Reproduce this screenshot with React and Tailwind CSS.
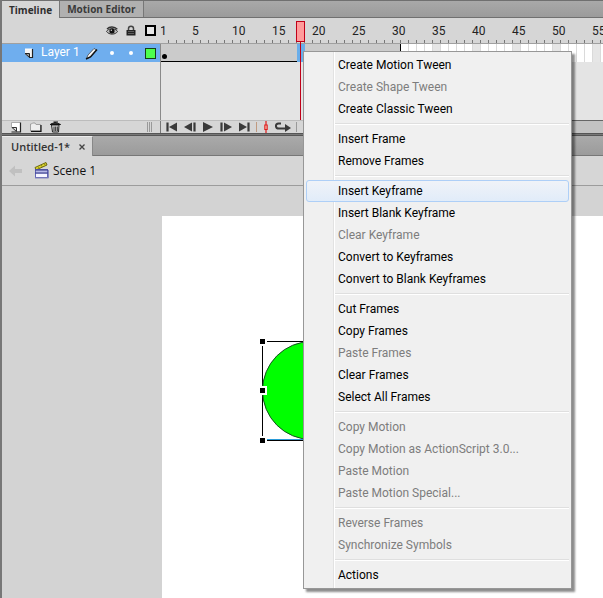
import React, { useEffect, useState } from "react";

const menuGroups = [
  [["Create Motion Tween"], ["Create Shape Tween", true], ["Create Classic Tween"]],
  [["Insert Frame"], ["Remove Frames"]],
  [
    ["Insert Keyframe"],
    ["Insert Blank Keyframe"],
    ["Clear Keyframe", true],
    ["Convert to Keyframes"],
    ["Convert to Blank Keyframes"],
  ],
  [["Cut Frames"], ["Copy Frames"], ["Paste Frames", true], ["Clear Frames"], ["Select All Frames"]],
  [
    ["Copy Motion", true],
    ["Copy Motion as ActionScript 3.0...", true],
    ["Paste Motion", true],
    ["Paste Motion Special...", true],
  ],
  [["Reverse Frames", true], ["Synchronize Symbols", true]],
  [["Actions"]],
];

const LAYER_COLUMN = 161;
const FRAME_WIDTH = 8;
const SPAN_END = 30;
const CURRENT = 18;
const ACTIVE_ITEM = "Insert Keyframe";

function useVisibleFrames() {
  const [width, setWidth] = useState(window.innerWidth);
  useEffect(() => {
    const onResize = () => setWidth(window.innerWidth);
    window.addEventListener("resize", onResize);
    return () => window.removeEventListener("resize", onResize);
  }, []);
  const count = Math.ceil((width - LAYER_COLUMN) / FRAME_WIDTH);
  return Array.from({ length: Math.max(count, SPAN_END) }, (_, i) => i + 1);
}

function EyeIcon() {
  return (
    <svg width="12" height="10" viewBox="0 0 12 10">
      <path d="M0.5 5.5C2.5 2 9 1.500 11.500 5.500C9.500 9 3 9 0.500 5.500Z" fill="#bbb" stroke="#333" strokeWidth="1" />
      <path d="M1 3C3.500 0.300 8.500 0.300 11.300 3.300" fill="none" stroke="#333" strokeWidth="1.300" />
      <circle cx="6" cy="5" r="2.600" fill="#111" />
      <circle cx="5.300" cy="4.200" r="0.700" fill="#ddd" />
    </svg>
  );
}

function LockIcon() {
  return (
    <svg width="10" height="11" viewBox="0 0 10 11">
      <path d="M2.500 5.500V3.500C2.500 0.500 7.500 0.500 7.500 3.500V5.500" fill="none" stroke="#444" strokeWidth="1.500" />
      <rect x="0.500" y="5" width="9" height="5.500" fill="#222" />
      <path d="M2 6.500H8M2 8.500H8" stroke="#777" strokeWidth="0.700" />
    </svg>
  );
}

function LayerIcon() {
  return (
    <svg width="10" height="11" viewBox="0 0 10 11">
      <path d="M1 1H8V9H5L1 6Z" fill="#f6f6f6" />
      <path d="M1 1H8" stroke="#fff" strokeWidth="1" />
      <path d="M8.500 1V9.500H5" fill="none" stroke="#222" strokeWidth="1.200" />
      <path d="M1 5.500H5.500V9.500Z" fill="#999" stroke="#222" strokeWidth="1" />
    </svg>
  );
}

function PencilIcon() {
  return (
    <svg width="13" height="13" viewBox="0 0 13 13">
      <path d="M1.500 11.500L3 8L9 1.500L11.500 3L5 10Z" fill="#f4f4f4" stroke="#333" strokeWidth="0.700" />
      <path d="M12 2.500L5.500 10L1 12" fill="none" stroke="#111" strokeWidth="1.500" />
    </svg>
  );
}

function NewLayerIcon() {
  return (
    <svg width="11" height="11" viewBox="0 0 11 11">
      <path d="M1 1H9V9H5L1 5Z" fill="#fff" />
      <path d="M0.500 6V0.500H9" fill="none" stroke="#aaa" strokeWidth="1" />
      <path d="M9.500 0.500V10H0.500" fill="none" stroke="#222" strokeWidth="1.200" />
      <path d="M1 5.500H5.500V9.500Z" fill="#ddd" stroke="#333" strokeWidth="1" />
    </svg>
  );
}

function FolderIcon() {
  return (
    <svg width="12" height="10" viewBox="0 0 12 10">
      <path d="M0.500 9V2H1.500L2.500 1H5L6 2.500H10.500V9Z" fill="#eee" stroke="#999" strokeWidth="0.900" />
      <path d="M11 3V9.400H1" fill="none" stroke="#111" strokeWidth="1.200" />
    </svg>
  );
}

function TrashIcon() {
  return (
    <svg width="11" height="12" viewBox="0 0 11 12">
      <path d="M1.500 4H9L8.500 11H2.500Z" fill="#ddd" stroke="#222" strokeWidth="1" />
      <path d="M0.500 3.500C2 1.500 8 1.500 10 3.500ZM3.500 1L8 1" fill="#555" stroke="#111" strokeWidth="1.200" />
      <path d="M4 5.500V10M5.700 5.500V10M7.300 5.500V10" stroke="#111" strokeWidth="0.900" />
    </svg>
  );
}

function ClapperIcon() {
  return (
    <svg width="15" height="17" viewBox="0 0 15 17">
      <path d="M1 5.500L12 0.500L13 3L2 8Z" fill="#dcd52c" stroke="#6b6710" strokeWidth="1" />
      <path d="M4 4.500L5.500 6.500M7 3L8.500 5M10 1.500L11.500 3.500" stroke="#8a8518" strokeWidth="1" />
      <rect x="1.500" y="7.500" width="12" height="8" fill="#f6f6ff" stroke="#6264b5" strokeWidth="1" />
      <path d="M1 8H14M1 11H14" stroke="#474b9c" strokeWidth="1.500" />
      <path d="M2 9.500H13" stroke="#b7b9e8" strokeWidth="1" />
      <path d="M1 16H14.500V8" fill="none" stroke="#8587bd" strokeWidth="1" />
    </svg>
  );
}

const transport = [
  ["First frame", "M1 1.500V10.500M2 1.500V10.500", "M11 1.500V10.500L3 6Z"],
  ["Step back", "M10 1.500V10.500M11 1.500V10.500", "M8 1.500V10.500L0 6Z"],
  ["Play", "", "M1 1V11L11 6Z"],
  ["Step forward", "M1 1.500V10.500M2 1.500V10.500", "M4 1.500V10.500L12 6Z"],
  ["Last frame", "M10 1.500V10.500M11 1.500V10.500", "M1 1.500V10.500L9 6Z"],
];

function Ruler({ frames }) {
  return (
    <div className="relative flex h-[25px] min-w-0 flex-1">
      <div className="flex min-w-0 flex-1 overflow-hidden">
        {frames.map((n) => (
          <div key={n} className="flex w-2 shrink-0 flex-col justify-between">
            <span className="-ml-px mt-[5px] h-4 w-0 whitespace-nowrap font-['Roboto','Liberation_Sans',sans-serif] text-[12px] leading-4 text-[#222]">
              {n === 1 || n % 5 === 0 ? n : ""}
            </span>
            <span className="h-[3px] w-px self-end bg-[#777]" />
          </div>
        ))}
      </div>
      <div className="absolute left-[135px] top-[3px] flex h-[99px] w-[9px] flex-col items-center">
        <div className="h-[21px] w-[9px] shrink-0 border border-[#c00018] bg-[#ff9b9b]" />
        <div className="w-px flex-1 bg-[#c00018]" />
      </div>
    </div>
  );
}

function FrameRow({ frames }) {
  return (
    <div className="flex min-w-0 flex-1 overflow-hidden">
      {frames.map((n) => {
        if (n > SPAN_END) {
          return (
            <div
              key={n}
              className={
                n % 5 === 0
                  ? "h-[18px] w-2 shrink-0 border-r border-[#dadada] bg-[#e6e6e6]"
                  : "h-[18px] w-2 shrink-0 border-r border-[#dadada] bg-white"
              }
            />
          );
        }
        if (n === CURRENT) {
          return <div key={n} className="h-[18px] w-2 shrink-0 bg-[#6aaeea]" />;
        }
        return (
          <div
            key={n}
            className={
              n === SPAN_END
                ? "h-[18px] w-2 shrink-0 border-b border-r border-black bg-[#cbcbcb]"
                : "flex h-[18px] w-2 shrink-0 items-end border-b border-black bg-[#cbcbcb] pb-[2px] pl-px"
            }
          >
            {n === 1 && <span className="h-[5px] w-[5px] shrink-0 rounded-full bg-black" />}
          </div>
        );
      })}
    </div>
  );
}

function Timeline() {
  const frames = useVisibleFrames();
  return (
    <section className="bg-[#e4e4e4]">
      <div className="flex h-[18px] border-b border-t border-[#707070] bg-gradient-to-b from-[#a9a9a9] to-[#9b9b9b] font-['Open_Sans','Noto_Sans',sans-serif] text-[10px] font-bold leading-4">
        <button className="-mb-px h-[17px] border-r border-[#777] bg-[#d6d6d6] px-[7px] text-[#2e2e2e]">Timeline</button>
        <button className="border-r border-[#777] bg-[#b0b0b0] px-[7px] text-[#3a3a3a]">Motion Editor</button>
      </div>
      <div className="flex border-b border-[#a0a0a0] bg-[#d6d6d6]">
        <div className="flex h-[25px] w-[159px] shrink-0 items-center justify-end gap-2 pr-[5px]">
          <button aria-label="Show or hide all layers"><EyeIcon /></button>
          <button aria-label="Lock or unlock all layers"><LockIcon /></button>
          <button aria-label="Show all layers as outlines" className="ml-px h-[11px] w-[11px] border-2 border-black bg-[#e8e8e8]" />
        </div>
        <Ruler frames={frames} />
      </div>
      <div className="flex h-[76px]">
        <div className="w-[159px] shrink-0 border-r border-[#8a8a8a]">
          <div className="flex h-[18px] items-center bg-[#6faeee] pr-1">
            <span className="ml-[22px]"><LayerIcon /></span>
            <span className="ml-[7px] flex-1 whitespace-nowrap pb-[2px] text-[12px] leading-4 text-white">Layer 1</span>
            <span className="mr-3"><PencilIcon /></span>
            <button aria-label="Layer visible" className="mr-[15px] h-1 w-1 rounded-full bg-white" />
            <button aria-label="Layer unlocked" className="mr-3 h-1 w-1 rounded-full bg-white" />
            <button aria-label="Layer outline colour" className="h-[11px] w-[11px] border border-[#173f17] bg-[#4dff4d]" />
          </div>
        </div>
        <FrameRow frames={frames} />
      </div>
      <div className="flex h-[13px] items-center border-t border-[#bcbcbc] bg-[#d6d6d6]">
        <div className="flex h-full w-[159px] shrink-0 items-center gap-2 border-r border-[#777] pl-[9px] pr-2">
          <button aria-label="New layer"><NewLayerIcon /></button>
          <button aria-label="New folder"><FolderIcon /></button>
          <button aria-label="Delete"><TrashIcon /></button>
          <div className="ml-auto flex h-[10px] gap-px">
            <span className="w-px bg-[#999]" />
            <span className="w-px bg-[#999]" />
            <span className="w-px bg-[#999]" />
          </div>
        </div>
        <div className="flex h-full items-center gap-[6px] pl-[5px]">
          {transport.map(([label, bar, tri]) => (
            <button key={label} aria-label={label}>
              <svg width="12" height="12" viewBox="0 0 12 12">
                <path d={bar} stroke="#3a3a3a" strokeWidth="1.200" />
                <path d={tri} fill="#3a3a3a" />
              </svg>
            </button>
          ))}
          <span className="h-[10px] w-px bg-[#c09a80]" />
          <button aria-label="Center frame">
            <svg width="6" height="12" viewBox="0 0 6 12">
              <path d="M3 0V12" stroke="#e01818" strokeWidth="1.200" />
              <rect x="1.800" y="4" width="2.400" height="4.500" fill="#f0b0a0" stroke="#e01818" strokeWidth="1" />
            </svg>
          </button>
          <button aria-label="Loop">
            <svg width="16" height="12" viewBox="0 0 16 12">
              <path d="M6 2.500H3.500C0 2.500 0 7.500 4 7.500H11" fill="none" stroke="#3a3a3a" strokeWidth="2" />
              <path d="M10 3L16 7L10 11Z" fill="#3a3a3a" />
            </svg>
          </button>
          <span className="-ml-px h-[10px] w-px bg-[#999]" />
          <button aria-label="Onion skin">
            <svg width="12" height="12" viewBox="0 0 12 12">
              <rect x="0.500" y="2.500" width="6" height="6" fill="#fff" stroke="#7676c8" />
              <rect x="3.500" y="5.500" width="6" height="6" fill="#c8c8f0" stroke="#5555a8" />
            </svg>
          </button>
        </div>
        <div className="-mt-px ml-[120px] h-[13px] flex-1 border-t border-[#666] bg-[#c2c2c2]" />
      </div>
      <div className="h-[3px] border-b border-t border-[#555] bg-[#777]" />
    </section>
  );
}

function StageView() {
  return (
    <section className="flex flex-1 flex-col">
      <div className="flex h-5 border-b border-[#777] bg-gradient-to-b from-[#aaaaaa] to-[#9b9b9b]">
        <div className="-mb-px flex h-5 items-center gap-2 border-r border-t border-[#888] border-t-[#ededed] bg-[#d6d6d6] pl-[9px] pr-[6px] leading-4 text-[#333]">
          <button className="font-['Open_Sans','Noto_Sans',sans-serif] text-[11px] font-semibold">Untitled-1*</button>
          <button aria-label="Close document">
            <svg width="8" height="8" viewBox="0 0 8 8">
              <path d="M1.500 1.500L6.500 6.500M6.500 1.500L1.500 6.500" stroke="#444" strokeWidth="1.300" />
            </svg>
          </button>
        </div>
      </div>
      <div className="flex h-[30px] items-center border-b border-[#9c9c9c] bg-[#d6d6d6] pl-[7px]">
        <button aria-label="Back" disabled>
          <svg width="14" height="12" viewBox="0 0 14 12">
            <path d="M0 6L6 0.500V4H13V8H6V11.500Z" fill="#c0c0c0" />
          </svg>
        </button>
        <span className="ml-[11px] pb-px"><ClapperIcon /></span>
        <span className="ml-1 font-['Open_Sans','Noto_Sans',sans-serif] text-[12px] leading-4 text-[#111]">Scene 1</span>
      </div>
      <div className="flex flex-1 bg-[#d3d3d3] pl-[160px] pt-[30px]">
        <div className="flex-1 bg-white pl-[96px] pt-[121px]">
          <svg width="108" height="108" viewBox="0 0 108 108">
            <rect x="4.500" y="4.500" width="98" height="99" fill="none" stroke="#000" />
            <path d="M9 102.500H103" stroke="#2a9bd8" />
            <circle cx="53.500" cy="53.500" r="49" fill="#00ff00" stroke="#14501e" />
            <path d="M0 0h9v9h-9zM0 49h9v9h-9zM0 99h9v9h-9z" fill="#fff" />
            <path d="M2 2h5v5h-5zM2 51h5v5h-5zM2 101h5v5h-5z" fill="#000" />
          </svg>
        </div>
      </div>
    </section>
  );
}

function ContextMenu() {
  return (
    <div
      role="menu"
      className="absolute left-[303px] top-[51px] w-[269px] border border-[#979797] bg-[#f0f0f0] bg-[linear-gradient(to_right,transparent_29px,#e2e2e2_29px,#e2e2e2_30px,#ffffff_30px,#ffffff_31px,transparent_31px)] p-[2px] shadow-[3px_3px_2px_rgba(0,0,0,0.45)]"
    >
      {menuGroups.map((group, gi) => (
        <React.Fragment key={gi}>
          {gi > 0 && (
            <div role="separator" className="flex h-2 items-center pl-[29px]">
              <div className="h-[2px] flex-1 border-b border-t border-b-white border-t-[#dfdfdf]" />
            </div>
          )}
          {group.map(([label, disabled]) => (
            <button
              key={label}
              role="menuitem"
              disabled={!!disabled}
              className={
                label === ACTIVE_ITEM
                  ? "flex h-[22px] w-full items-center rounded-[3px] border border-[#aecff7] bg-gradient-to-b from-[#f0f3f8] to-[#e1ecf9] pl-[31px] text-left text-black"
                  : "flex h-[22px] w-full items-center border border-transparent pl-[31px] text-left text-black disabled:text-[#7d7d7d]"
              }
            >
              {label}
            </button>
          ))}
        </React.Fragment>
      ))}
    </div>
  );
}

export default function App() {
  return (
    <div className="relative flex min-h-screen flex-col overflow-hidden border-l-2 border-[#777] bg-[#d3d3d3] font-['Roboto','Liberation_Sans',sans-serif] text-[12px] leading-4">
      <Timeline />
      <StageView />
      <div className="absolute -left-[2px] top-0">
        <ContextMenu />
      </div>
    </div>
  );
}
